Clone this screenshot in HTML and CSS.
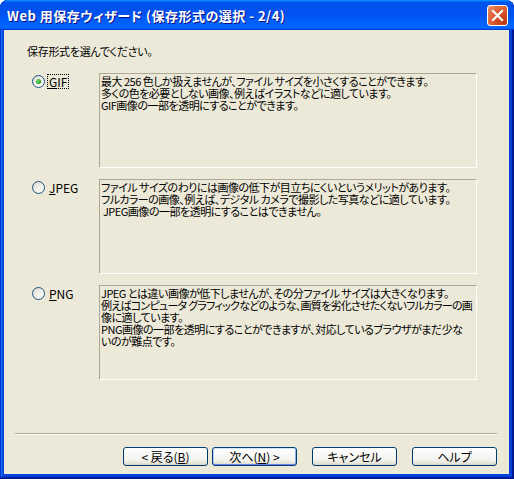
FILE: index.html
```html
<!DOCTYPE html>
<html lang="ja">
<head>
  <meta charset="UTF-8" />
  <title>Web 用保存ウィザード</title>
  <link rel="stylesheet" href="styles.css">
</head>
<body>
  <div class="window">
    <div class="titlebar">
      <span class="title">Web 用保存ウィザード (保存形式の選択 - 2/4)</span>
      <button class="close" aria-label="閉じる">
        <svg width="13" height="13" viewBox="0 0 13 13">
          <path d="M2 2 L11 11 M11 2 L2 11" stroke="#fff" stroke-width="2.2" stroke-linecap="square" fill="none"/>
        </svg>
      </button>
    </div>

    <div class="frame">
      <p class="prompt">保存形式を選んでください。</p>

      <div class="options">
        <div class="option">
          <label class="choice"><span class="radio checked"></span><span class="name focused"><u>G</u>IF</span></label>
          <div class="desc">最大 256 色しか扱えませんが、ファイル サイズを小さくすることができます。<br>多くの色を必要としない画像、例えばイラストなどに適しています。<br>GIF画像の一部を透明にすることができます。</div>
        </div>
        <div class="option">
          <label class="choice"><span class="radio"></span><span class="name"><u>J</u>PEG</span></label>
          <div class="desc">ファイル サイズのわりには画像の低下が目立ちにくいというメリットがあります。<br>フルカラーの画像、例えば、デジタル カメラで撮影した写真などに適しています。<br>&nbsp;JPEG画像の一部を透明にすることはできません。</div>
        </div>
        <div class="option">
          <label class="choice"><span class="radio"></span><span class="name"><u>P</u>NG</span></label>
          <div class="desc">JPEG とは違い画像が低下しませんが、その分ファイル サイズは大きくなります。<br><span class="tight">例えばコンピュータ グラフィックなどのような、画質を劣化させたくないフルカラーの画</span><br>像に適しています。<br>PNG画像の一部を透明にすることができますが、対応しているブラウザがまだ少な<br>いのが難点です。</div>
        </div>
      </div>

      <div class="sep"></div>

      <div class="buttons">
        <div class="nav">
          <button class="btn">&lt; 戻る(<u>B</u>)</button>
          <button class="btn default">次へ(<u>N</u>) &gt;</button>
        </div>
        <button class="btn">キャンセル</button>
        <button class="btn">ヘルプ</button>
      </div>
    </div>
  </div>
</body>
</html>
```

FILE: styles.css
```css
html, body {
  margin: 0;
  padding: 0;
  background: #ffffff;
}
body {
  font-family: "Noto Sans CJK JP", "Noto Sans", sans-serif;
  font-size: 12px;
  font-feature-settings: "palt" 1;
  color: #000;
}
.window {
  width: 514px;
  height: 479px;
  box-sizing: border-box;
  display: flex;
  flex-direction: column;
  padding: 0 5px 5px 4px;
  border-radius: 8px 8px 0 0;
  overflow: hidden;
  background: #0842d6;
  box-shadow: inset -1px -1px #00138c, inset 1px 0 #0831d9,
              inset -2px -2px #001ea0, inset 2px 0 #166aee,
              inset -3px -3px #003bda, inset 3px 0 #0855dd;
}
.titlebar {
  flex: none;
  height: 30px;
  margin: 0 -5px 0 -4px;
  padding: 0 6px 0 7px;
  display: flex;
  align-items: center;
  border-radius: 8px 8px 0 0;
  background: linear-gradient(180deg, #0997ff, #0053ee 8%, #0050ee 40%, #0066ff 88%, #0066ff 93%, #005bff 95%, #003dd7 96%, #003dd7);
}
.title {
  flex: 1;
  color: #fff;
  font-weight: bold;
  font-size: 13px;
  letter-spacing: 0.5px;
  text-shadow: 1px 1px #0f1089;
  white-space: nowrap;
}
.close {
  width: 21px;
  height: 21px;
  margin-top: 1px;
  padding: 0;
  display: flex;
  align-items: center;
  justify-content: center;
  border: 1px solid #fff;
  border-radius: 3px;
  background: radial-gradient(circle at 85% 85%, #c13a12 0%, #d9532a 45%, #e4794f 80%, #f2a98a 100%);
}
.frame {
  flex: 1;
  background: #ece9d8;
  padding: 15px 12px 8px 11px;
  display: flex;
  flex-direction: column;
}
.prompt {
  margin: 0 0 0 12px;
  font-size: 11px;
  letter-spacing: -0.3px;
  line-height: 12px;
  height: 12px;
}
.options {
  margin: 16px 20px 0 17px;
  display: flex;
  flex-direction: column;
  gap: 11px;
}
.option {
  display: grid;
  grid-template-columns: 67px 1fr;
  height: 95px;
}
.choice {
  display: flex;
  align-items: center;
  gap: 2px;
  height: 15px;
  margin-top: 1px;
}
.radio {
  position: relative;
  width: 13px;
  height: 13px;
  box-sizing: border-box;
  border: 1px solid #1c5180;
  border-radius: 50%;
  background: linear-gradient(135deg, #dcd9cf, #f4f3ee 60%, #ffffff);
}
.radio.checked::after {
  content: "";
  position: absolute;
  left: 3px;
  top: 3px;
  width: 5px;
  height: 5px;
  border-radius: 50%;
  background: radial-gradient(circle at 35% 35%, #6fe06b, #21a121 70%, #108d10);
}
.name {
  padding: 0 1px;
  line-height: 13px;
  border: 1px dotted transparent;
}
.name.focused {
  border-color: #000;
}
.desc {
  box-sizing: border-box;
  height: 95px;
  padding: 1px 0 0 1px;
  font-size: 11px;
  letter-spacing: -0.5px;
  line-height: 12px;
  white-space: nowrap;
  overflow: hidden;
  border-top: 1px solid #aca899;
  border-left: 1px solid #aca899;
  border-right: 1px solid #fff;
  border-bottom: 1px solid #fff;
}
.tight {
  letter-spacing: -0.75px;
}
.sep {
  margin-top: 53px;
  height: 1px;
  border-top: 1px solid #aca899;
  background: #fff;
}
.buttons {
  margin-top: 12px;
  display: flex;
  justify-content: flex-end;
  gap: 15px;
}
.nav {
  display: flex;
  gap: 4px;
}
.btn {
  width: 85px;
  height: 19px;
  padding: 0;
  font: inherit;
  line-height: 15px;
  color: #000;
  border: 1px solid #003c74;
  border-radius: 3px;
  background: linear-gradient(180deg, #ffffff, #f3f3ef 70%, #e6e3d9 90%, #d6d0c5);
}
.btn.default {
  box-shadow: inset 0 1px #cee7ff, inset 0 -1px #6982ee, inset 1px 0 #b8d0f8, inset -1px 0 #8eaef0;
}
```
